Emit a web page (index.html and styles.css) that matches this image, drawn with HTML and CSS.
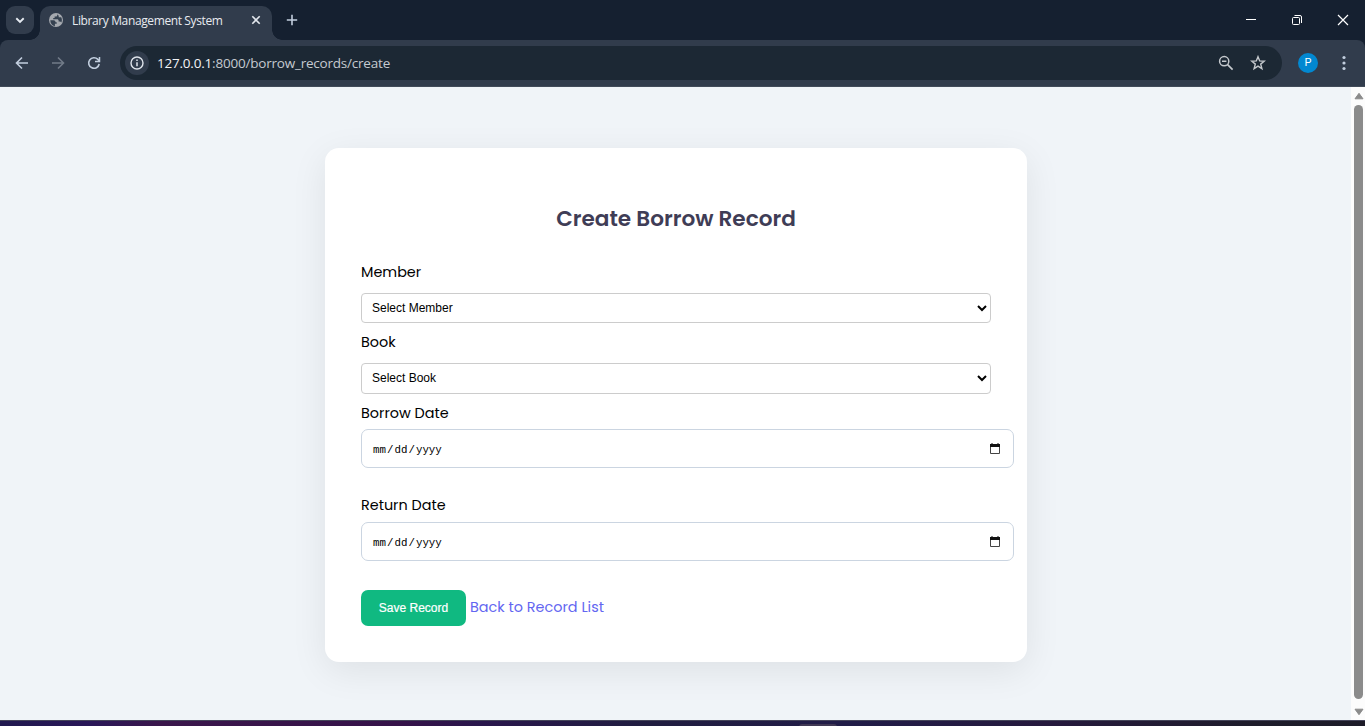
FILE: index.html
```html
<!DOCTYPE html>
<html lang="en">
<head>
<meta charset="utf-8">
<title>Library Management System</title>
<link rel="stylesheet" href="styles.css">
</head>
<body>
<div class="window">
  <header class="tabs">
    <div class="tab-search"><svg width="28" height="28" viewBox="0 0 28 28"><path d="M10.3 12.3 14 15.9l3.7-3.6" fill="none" stroke="#e6ebf2" stroke-width="1.9"/></svg></div>
    <div class="tab">
      <svg class="globe" width="16" height="16" viewBox="0 0 16 16"><circle cx="8" cy="8" r="7" fill="#a5a9af"/><path d="M2.300 8.200h3.200c1.400 0 2 .8 2 2h1.200v1.600H6.900v2.400C4.200 13.700 2.300 11.300 2.300 8.200zM9.200 2.300v.9c0 .8-.6 1.300-1.400 1.300H6.600v1.400H5.200v1.300h4.100c.8 0 1.300.6 1.300 1.300v1h1.200c.7 0 1.200.4 1.500 1 .4-.8.6-1.600.6-2.500 0-1-.3-2-.7-2.800h-2.500V3.700z" fill="#354150"/></svg>
      <span class="tab-title">Library Management System</span>
      <svg class="tab-close" width="10" height="10" viewBox="0 0 10 10"><path d="m1.300 1.300 7.400 7.400M8.700 1.300 1.300 8.700" stroke="#e3e7ed" stroke-width="1.600"/></svg>
    </div>
    <svg class="new-tab" width="12" height="12" viewBox="0 0 12 12"><path d="M6 .8v10.400M.8 6h10.400" stroke="#c2cede" stroke-width="1.600"/></svg>
    <div class="controls">
      <svg width="46" height="40" viewBox="0 0 46 40"><path d="M18 19.500h10" stroke="#fff"/></svg>
      <svg width="46" height="40" viewBox="0 0 46 40" fill="none" stroke="#fff"><rect x="18.500" y="17.500" width="7" height="7" rx="1"/><path d="M20.500 15.500H26a1.500 1.500 0 0 1 1.500 1.500v6"/></svg>
      <svg width="46" height="40" viewBox="0 0 46 40"><path d="m18 15 10 10M28 15 18 25" stroke="#fff" stroke-width="1.200"/></svg>
    </div>
  </header>
  <nav class="toolbar">
    <svg class="tool" width="16" height="16" viewBox="0 0 16 16"><path d="M14 8H3M8 2.500 2.500 8 8 13.500" fill="none" stroke="#c2cede" stroke-width="1.600"/></svg>
    <svg class="tool" width="16" height="16" viewBox="0 0 16 16"><path d="M2 8h11M8 2.500 13.500 8 8 13.500" fill="none" stroke="#717b88" stroke-width="1.600"/></svg>
    <svg class="tool" width="16" height="16" viewBox="0 0 16 16"><path d="M13.200 9A5.300 5.300 0 1 1 11.900 4.400L13.300 6" fill="none" stroke="#c2cede" stroke-width="1.600"/><path d="M13.500 2v4.600H9" fill="none" stroke="#c2cede" stroke-width="1.500"/></svg>
    <div class="address">
      <div class="info"><svg width="14" height="14" viewBox="0 0 14 14"><circle cx="7" cy="7" r="6" fill="none" stroke="#dfe4eb" stroke-width="1.400"/><path d="M7 6.200v4M7 3.500V5" stroke="#dfe4eb" stroke-width="1.500"/></svg></div>
      <span class="url"><b>127.0.0.1</b>:8000/borrow_records/create</span>
      <svg class="magnifier" width="16" height="16" viewBox="0 0 16 16"><circle cx="6.200" cy="6.200" r="4.600" fill="none" stroke="#c5c9cd" stroke-width="1.500"/><path d="M4 6.200h4.400M9.600 9.600l5 5" stroke="#c5c9cd" stroke-width="1.600"/></svg>
      <svg width="16" height="16" viewBox="0 0 16 16"><path d="m8 1.700 1.700 4.200 4.500.3-3.500 2.900 1.200 4.500L8 11.100l-3.900 2.500 1.200-4.500-3.500-2.900 4.500-.3z" fill="none" stroke="#c5c9cd" stroke-width="1.400"/></svg>
    </div>
    <div class="avatar">P</div>
    <svg class="menu" width="4" height="16" viewBox="0 0 4 16" fill="#c2cede"><circle cx="2" cy="2.500" r="1.600"/><circle cx="2" cy="8" r="1.600"/><circle cx="2" cy="13.500" r="1.600"/></svg>
  </nav>
  <div class="viewport">
    <main class="page">
      <section class="card">
        <h2 class="title">Create Borrow Record</h2>
        <div class="field"><label class="label">Member</label>
          <div class="select"><span>Select Member</span><svg width="10" height="8" viewBox="0 0 10 8"><path d="m1 2 4 4 4-4" fill="none" stroke="#000" stroke-width="2"/></svg></div></div>
        <div class="field book-field"><label class="label">Book</label>
          <div class="select tall"><span>Select Book</span><svg width="10" height="8" viewBox="0 0 10 8"><path d="m1 2 4 4 4-4" fill="none" stroke="#000" stroke-width="2"/></svg></div></div>
        <div class="field borrow-field"><label class="label">Borrow Date</label>
          <div class="date"><span>mm<i>/</i>dd<i>/</i>yyyy</span><svg width="10" height="11" viewBox="0 0 10 11"><path d="M.5 2.500h9v8h-9z" fill="none" stroke="#444"/><path d="M0 1h10v3H0zM1.500 0h1v2h-1zM7.500 0h1v2h-1z" fill="#111"/></svg></div></div>
        <div class="field return-field"><label class="label">Return Date</label>
          <div class="date"><span>mm<i>/</i>dd<i>/</i>yyyy</span><svg width="10" height="11" viewBox="0 0 10 11"><path d="M.5 2.500h9v8h-9z" fill="none" stroke="#444"/><path d="M0 1h10v3H0zM1.500 0h1v2h-1zM7.500 0h1v2h-1z" fill="#111"/></svg></div></div>
        <div class="actions"><button class="save">Save Record</button><a class="back">Back to Record List</a></div>
      </section>
    </main>
    <div class="scrollbar">
      <svg width="10" height="8" viewBox="0 0 10 8"><path d="M5 1.300 9 6.800H1z" fill="#8b8b8b" stroke="#8b8b8b" stroke-linejoin="round"/></svg>
      <div class="thumb"></div>
      <svg width="10" height="8" viewBox="0 0 10 8"><path d="M5 6.700 1 1.200h8z" fill="#8b8b8b" stroke="#8b8b8b" stroke-linejoin="round"/></svg>
    </div>
  </div>
  <footer class="taskbar"><div class="task"></div></footer>
</div>
</body>
</html>
```
FILE: styles.css
```css
* { box-sizing: border-box; }
body { margin: 0; overflow: hidden; font-family: Poppins, Inter, sans-serif; }
svg { display: block; flex: none; }
.window { width: 1365px; height: 726px; display: flex; flex-direction: column; background: #152030; }
.tabs { height: 40px; display: flex; align-items: center; padding-left: 6px; background: #152030; }
.tab-search { width: 28px; height: 28px; border-radius: 9px; background: #313c4c; }
.tab { position: relative; width: 232px; height: 34px; margin: 6px 0 0 6px; padding: 0 11px 6px 8px; display: flex; align-items: center; border-radius: 10px 10px 0 0; background: #313c4c; }
.tab::before, .tab::after { content: ""; position: absolute; bottom: 0; width: 10px; height: 10px; }
.tab::before { left: -10px; background: radial-gradient(circle at 0 0, transparent 9.5px, #313c4c 10px); }
.tab::after { right: -10px; background: radial-gradient(circle at 100% 0, transparent 9.5px, #313c4c 10px); }
.tab-title { margin-left: 8px; padding-top: 2px; font: 12px/16px "Open Sans", sans-serif; color: #e8ebf0; white-space: nowrap; letter-spacing: -.38px; }
.tab-close { margin-left: auto; }
.new-tab { margin-left: 14px; }
.controls { margin-left: auto; margin-right: -1px; display: flex; }
.toolbar { height: 47px; display: flex; align-items: center; padding: 0 19px 0 14px; background: #313c4c; border-bottom: 1px solid #414b59; border-radius: 8px 8px 0 0; }
.tool { margin-right: 20px; }
.address { width: 1162px; height: 34px; margin-left: -2px; padding: 0 16px 0 5px; display: flex; align-items: center; border-radius: 17px; background: #1c2834; }
.info { width: 24px; height: 24px; display: grid; place-items: center; border-radius: 50%; background: #313c4c; }
.url { margin-left: 8px; padding-bottom: 1px; font: 13.500px/20px "Open Sans", sans-serif; color: #c5cad0; white-space: nowrap; letter-spacing: -.21px; }
.url b { font-weight: 400; color: #f2f4f7; }
.magnifier { margin-left: auto; margin-right: 16px; }
.avatar { width: 20px; height: 20px; margin-left: 16px; border-radius: 50%; background: #0288d1; color: #fff; font: 11px/20px Roboto, sans-serif; text-align: center; }
.menu { margin-left: auto; }
.viewport { height: 633px; display: flex; background: #f0f4f8; }
.page { flex: 1; padding: 61px 0 0 325px; overflow: hidden; }
.card { width: 702px; height: 514px; padding: 54px 36px 0; border-radius: 14px; background: #fff; box-shadow: 0 9px 36px rgba(0, 0, 0, .08); }
.title { margin: 0 0 35px; font-size: 21.600px; line-height: 34px; font-weight: 600; color: #3f3d56; text-align: center; white-space: nowrap; }
.field { display: flex; flex-direction: column; align-items: flex-start; height: 70px; }
.book-field { height: 71px; }
.borrow-field { height: 92px; }
.return-field { height: 86px; }
.label { height: 22px; font-size: 14.400px; line-height: 22px; color: #000; white-space: nowrap; margin-top: -10px; }
.select { width: 630px; height: 30px; margin-top: 10px; padding: 0 3px 1px 10px; display: flex; align-items: center; justify-content: space-between; border: 1px solid #ccc; border-radius: 4px; font: 12px/16px "Liberation Sans", sans-serif; }
.select.tall { height: 31px; }
.date { width: 653px; height: 39px; margin-top: 5px; padding: 0 13px 0 11px; display: flex; align-items: center; justify-content: space-between; border: 1px solid #cbd5e1; border-radius: 7px; font: 10.800px/16px "Liberation Mono", monospace; color: #000; }
.return-field .date { margin-top: 6px; }
.return-field .date svg { margin-bottom: 1px; }
.date span { padding-top: 2px; }
.date i { font-style: normal; margin: 0 1px; }
.actions { display: flex; align-items: center; }
.save { width: 105px; height: 36px; padding: 0; border: 0; border-radius: 7px; background: #10b981; color: #fff; font: 12px/16px "Liberation Sans", sans-serif; -webkit-text-stroke: .2px #fff; }
.back { margin: -2px 0 0 4px; font-size: 14.400px; color: #6366f1; white-space: nowrap; }
.scrollbar { width: 14px; padding: 5px 1px 4px 2px; display: flex; flex-direction: column; align-items: center; background: #fcfcfc; }
.thumb { width: 9px; height: 594px; margin: 5px 0 9px; border-radius: 5px; background: #8b8b8b; }
.taskbar { height: 6px; padding-left: 799px; padding-top: 3px; border-top: 1px solid #45455a; background: linear-gradient(90deg, #20184f 0, #291758 90px, #3a164b 160px, #351249 400px, #29164c 480px, #201d40 650px, #211c48 850px, #25193d 1050px, #1e1c2b 1250px, #1c1b28 1365px); }
.task { width: 38px; height: 3px; border-radius: 3px 3px 0 0; background: #403854; }
```
